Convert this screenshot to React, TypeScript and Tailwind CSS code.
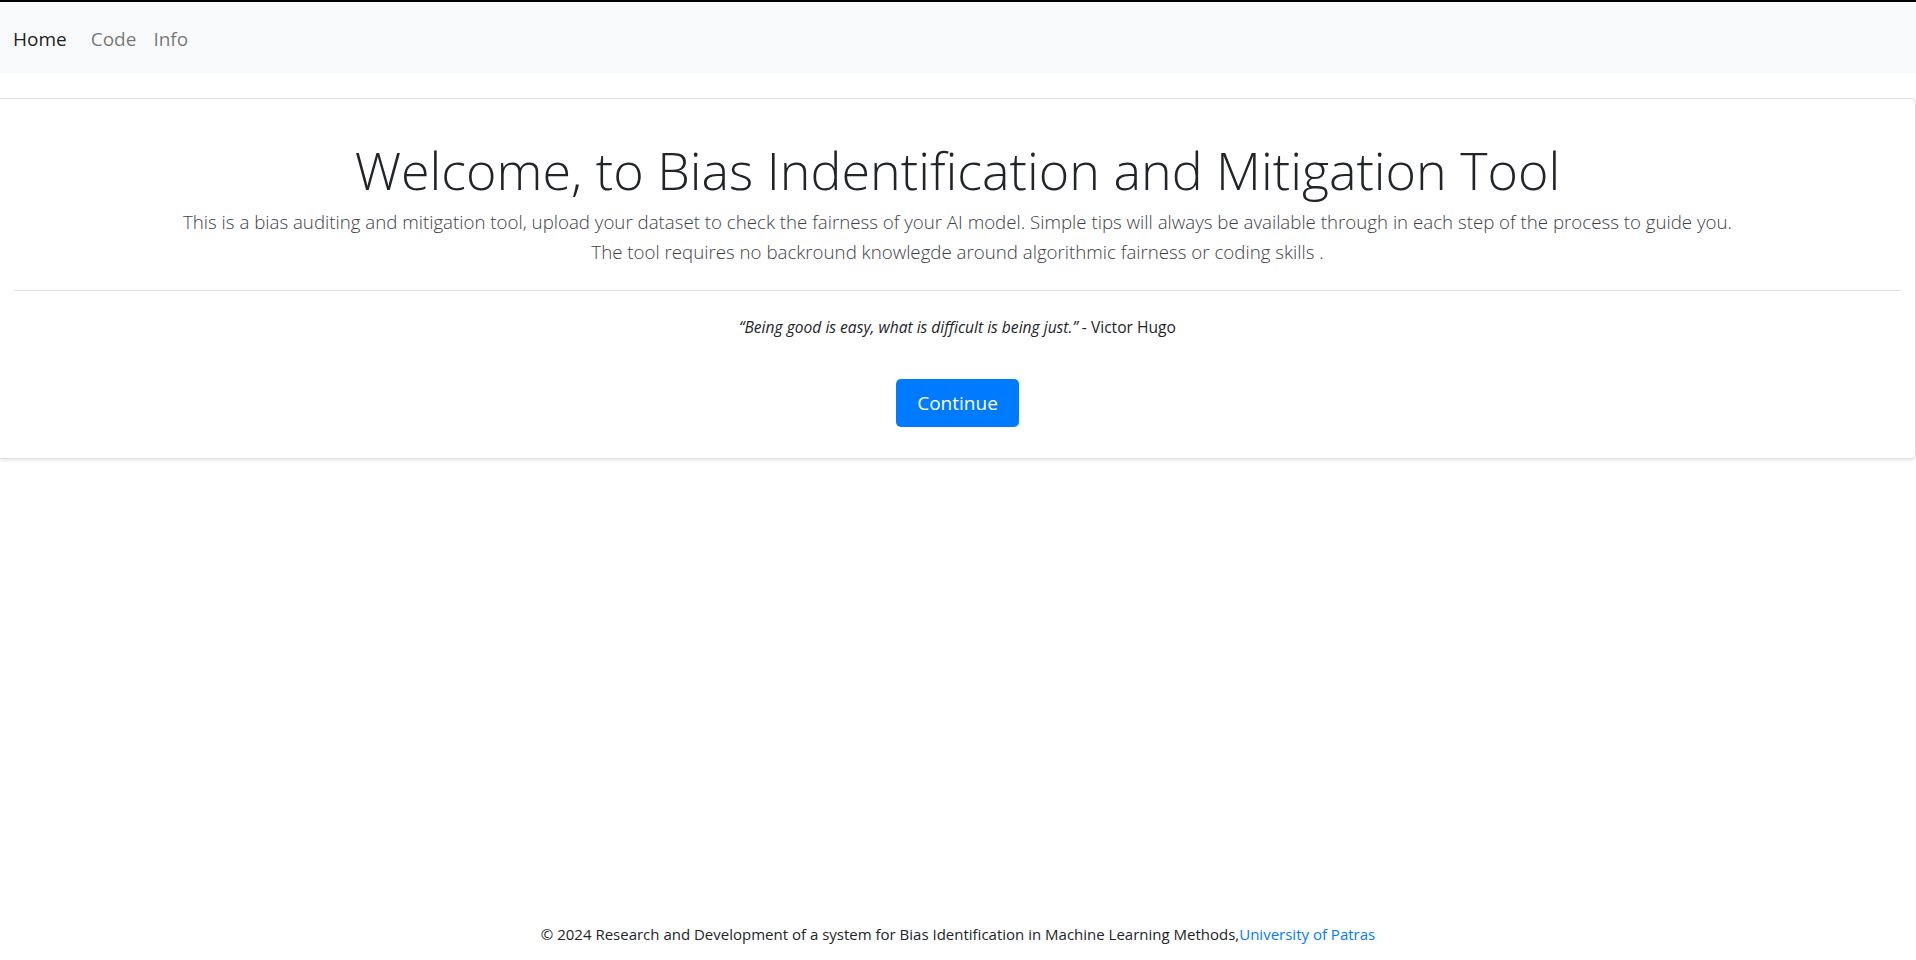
import React from 'react';

const font = { fontFamily: '"Open Sans", "Noto Sans", sans-serif' };

function NavBar() {
  return (
    <nav className="flex h-[71px] items-center bg-[#f8f9fa] px-[13px] pt-[4px]">
      <a className="mr-[24px] text-[19px] text-black/90">Home</a>
      <a className="mr-[17px] text-[19px] text-black/55">Code</a>
      <a className="text-[19px] text-black/55">Info</a>
    </nav>
  );
}

export default function App() {
  return (
    <div style={font} className="flex min-h-[960px] flex-col border-t-2 border-black bg-white text-[#212529]">
      <NavBar />

      {/* Welcome card */}
      <div className="mt-[25px] rounded-r-[5px] border border-l-0 border-[#dfdfdf] bg-white shadow-[0_2px_3px_rgba(0,0,0,0.08)]">
        <div className="px-[14px] pt-[35px] pb-[31px] text-center">
          <h1 className="text-[52px] font-light leading-[72px] text-[#212529]">
            Welcome, to Bias Indentification and Mitigation Tool
          </h1>
          <p className="mt-[1px] text-[18.7px] font-light leading-[30px] text-[#3d4248]">
            This is a bias auditing and mitigation tool, upload your dataset to check the fairness of your AI model. Simple tips will always be available through in each step of the process to guide you.
            <br />
            The tool requires no backround knowlegde around algorithmic fairness or coding skills .
          </p>
          <hr className="mt-[23px] border-t border-[#e5e5e5]" />
          <p className="mt-[26px] text-[15.6px] leading-[20px]">
            <i>“Being good is easy, what is difficult is being just.”</i> - Victor Hugo
          </p>
          <button className="mt-[42px] h-[48px] rounded-[5px] bg-[#007bff] px-[21px] text-[19px] text-white">
            Continue
          </button>
        </div>
      </div>

      <footer className="mt-auto pb-[16px] text-center text-[15px] leading-[20px]">
        © 2024 Research and Development of a system for Bias Identification in Machine Learning Methods,
        <a className="text-[#007bff]">University of Patras</a>
      </footer>
    </div>
  );
}
